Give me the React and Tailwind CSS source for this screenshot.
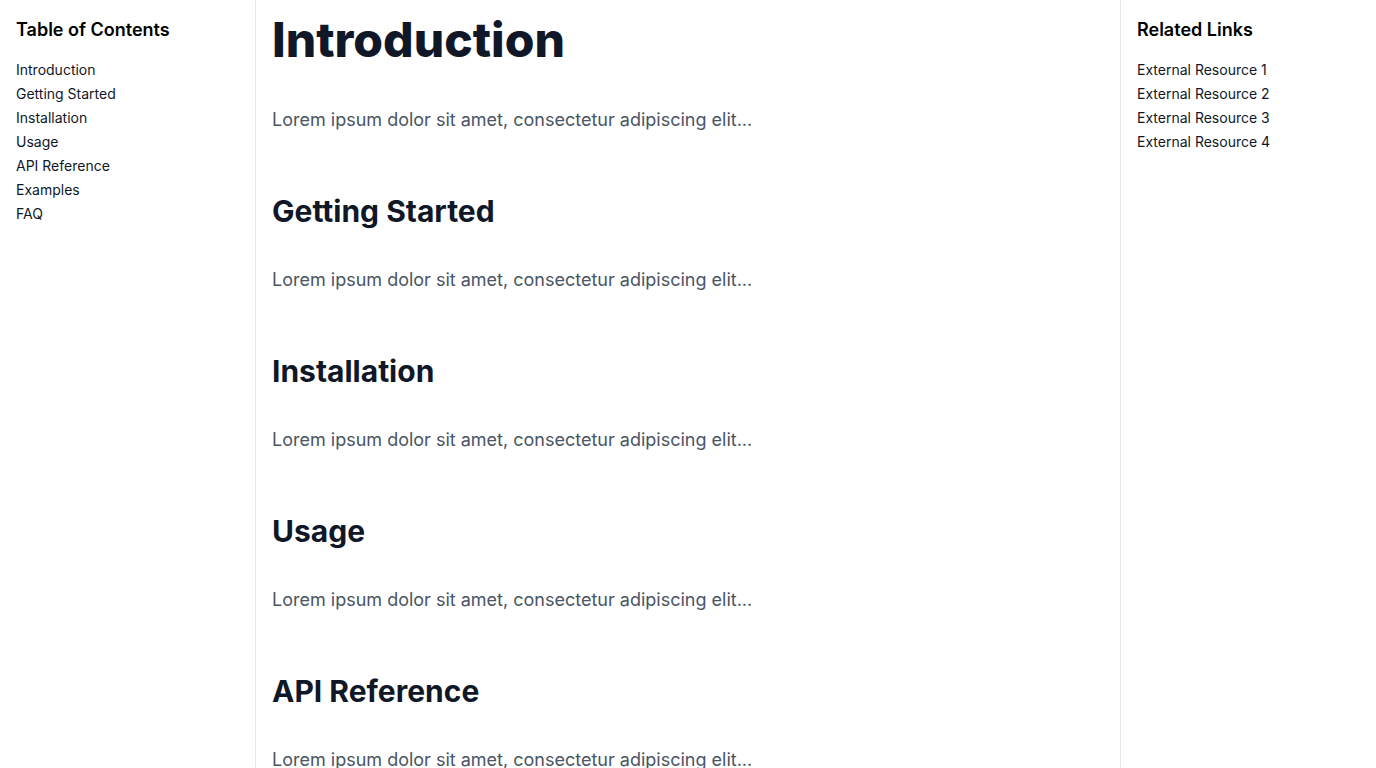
import React from "react";

const toc = ["Introduction", "Getting Started", "Installation", "Usage", "API Reference", "Examples", "FAQ"];
const links = ["External Resource 1", "External Resource 2", "External Resource 3", "External Resource 4"];
const sections = ["Getting Started", "Installation", "Usage", "API Reference", "Examples", "FAQ"];

export default function App() {
  return (
    <div className="flex h-[768px] overflow-hidden bg-white" style={{ fontFamily: "Inter, 'Noto Sans', sans-serif" }}>
      <aside className="w-64 shrink-0 border-r border-gray-200 p-4">
        <h2 className="text-lg font-semibold text-black mb-4">Table of Contents</h2>
        <ul className="space-y-1">
          {toc.map((t) => (
            <li key={t} className="text-sm text-gray-900">{t}</li>
          ))}
        </ul>
      </aside>
      <main className="flex-1 p-4 overflow-hidden">
        <h1 className="text-5xl font-extrabold text-gray-900 mb-[42px]">Introduction</h1>
        <p className="text-lg text-gray-600 mb-[59px]">Lorem ipsum dolor sit amet, consectetur adipiscing elit...</p>
        {sections.map((s) => (
          <section key={s}>
            <h2 className="text-3xl font-bold text-gray-900 mb-[37px]">{s}</h2>
            <p className="text-lg text-gray-600 mb-[59px]">Lorem ipsum dolor sit amet, consectetur adipiscing elit...</p>
          </section>
        ))}
      </main>
      <aside className="w-64 shrink-0 border-l border-gray-200 p-4">
        <h2 className="text-lg font-semibold text-black mb-4">Related Links</h2>
        <ul className="space-y-1">
          {links.map((t) => (
            <li key={t} className="text-sm text-gray-900">{t}</li>
          ))}
        </ul>
      </aside>
    </div>
  );
}
